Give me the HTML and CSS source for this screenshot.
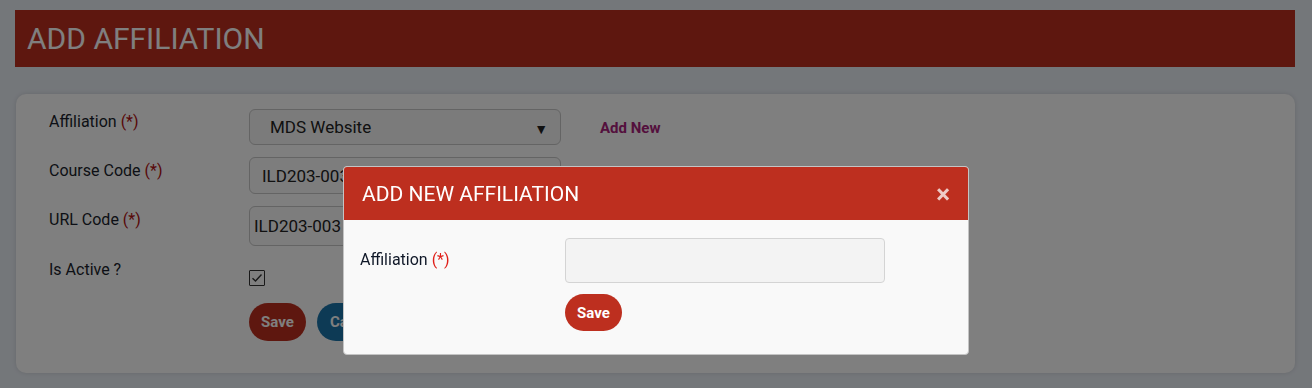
FILE: index.html
```html
<!DOCTYPE html>
<html lang="en">
<head>
  <meta charset="UTF-8">
  <meta name="viewport" content="width=device-width, initial-scale=1.0">
  <title>Add Affiliation</title>
  <link rel="stylesheet" href="styles.css">
</head>
<body>
  <h1 class="page-title">ADD AFFILIATION</h1>

  <div class="card">
    <div class="form-row row-select">
      <label class="form-label">Affiliation <span class="req">(*)</span></label>
      <div class="select-box">
        <span>MDS Website</span>
        <span class="caret">&#9660;</span>
      </div>
      <a href="#" class="add-new">Add New</a>
    </div>
    <div class="form-row row-course">
      <label class="form-label">Course Code <span class="req">(*)</span></label>
      <input type="text" class="text-input" value="ILD203-003">
    </div>
    <div class="form-row row-url">
      <label class="form-label">URL Code <span class="req">(*)</span></label>
      <input type="text" class="text-input url-input" value="ILD203-003">
    </div>
    <div class="form-row row-active">
      <label class="form-label">Is Active ?</label>
      <span class="check">
        <svg width="12" height="10" viewBox="0 0 12 10"><path d="M1.5 5.2 L4.5 8 L10.5 1.5" fill="none" stroke="#333" stroke-width="1.4"/></svg>
      </span>
    </div>
    <div class="form-row row-actions">
      <span class="form-label"></span>
      <button class="btn btn-save">Save</button>
      <button class="btn btn-cancel">Cancel</button>
    </div>
  </div>

  <div class="overlay"></div>

  <div class="modal">
    <div class="modal-header">
      <h2>ADD NEW AFFILIATION</h2>
      <span class="close">&times;</span>
    </div>
    <div class="modal-body">
      <label class="modal-label">Affiliation <span class="req-bright">(*)</span></label>
      <div class="modal-field">
        <input type="text" class="modal-input">
        <button class="btn btn-save">Save</button>
      </div>
    </div>
  </div>
</body>
</html>
```

FILE: styles.css
```css
* {
  margin: 0;
  padding: 0;
  box-sizing: border-box;
}
body {
  background: #e9eef5;
  font-family: Roboto, "Liberation Sans", sans-serif;
  padding: 10px 17px 0 15px;
  height: 388px;
  overflow: hidden;
}
.page-title {
  background: #bd2f1f;
  color: #fff;
  font-size: 30px;
  font-weight: 400;
  height: 57px;
  line-height: 58px;
  padding-left: 12px;
}
.card {
  margin: 27px 0 0 1px;
  background: #fefefe;
  border-radius: 10px;
  height: 279px;
  padding: 15px 0 0 33px;
  box-shadow: 0 0 5px rgba(0, 0, 0, 0.12);
}
.form-row {
  display: flex;
  align-items: flex-start;
}
.form-label {
  width: 200px;
  flex-shrink: 0;
  font-size: 16px;
  color: #1a1e2c;
  padding-top: 3px;
}
.row-course .form-label,
.row-url .form-label {
  padding-top: 4px;
}
.req {
  color: #b01010;
}
.req-bright {
  color: #e0201a;
}
.select-box {
  width: 312px;
  height: 36px;
  border: 1px solid #c8c8c8;
  border-radius: 6px;
  background: #f6f6f6;
  display: flex;
  align-items: center;
  justify-content: space-between;
  padding: 0 12px 0 20px;
  font-size: 17px;
  color: #222;
}
.caret {
  font-size: 14px;
  padding-top: 4px;
}
.add-new {
  margin: 10px 0 0 39px;
  font-size: 15px;
  font-weight: 700;
  color: #a8207a;
  text-decoration: none;
}
.row-course {
  margin-top: 12px;
}
.row-url {
  margin-top: 12px;
}
.row-active {
  margin-top: 13px;
}
.text-input {
  width: 312px;
  height: 37px;
  border: 1px solid #c8c8c8;
  border-radius: 6px;
  background: #fafafa;
  padding-left: 12px;
  font-family: inherit;
  font-size: 17px;
  color: #222;
}
.url-input {
  height: 40px;
  padding-left: 4px;
}
.row-active .form-label {
  padding-top: 1px;
}
.check {
  width: 16px;
  height: 16px;
  margin-top: 11px;
  border: 1px solid #333;
  border-radius: 1px;
  background: #fff;
  display: flex;
  align-items: center;
  justify-content: center;
}
.row-actions {
  margin-top: 17px;
}
.btn {
  border: none;
  border-radius: 20px;
  height: 38px;
  padding: 0 12px;
  font-family: inherit;
  font-size: 15px;
  font-weight: 700;
  color: #fff;
}
.btn-save {
  background: #bd2f1f;
  width: 57px;
}
.btn-cancel {
  background: #1a74aa;
  margin-left: 11px;
  width: 72px;
}
.overlay {
  position: fixed;
  inset: 0;
  background: rgba(0, 0, 0, 0.5);
}
.modal {
  position: fixed;
  left: 343px;
  top: 166px;
  width: 626px;
  height: 189px;
  background: #f9f9f9;
  border: 1px solid #c4c4c4;
  border-radius: 4px;
  overflow: hidden;
}
.modal-header {
  background: #bd2f1f;
  height: 53px;
  display: flex;
  align-items: center;
  justify-content: space-between;
  padding: 0 18px 0 18px;
  color: #fff;
}
.modal-header h2 {
  font-size: 21px;
  font-weight: 400;
}
.close {
  font-size: 26px;
  font-weight: 700;
  opacity: 0.75;
  line-height: 1;
}
.modal-body {
  display: flex;
  padding: 18px 0 0 16px;
}
.modal-label {
  width: 205px;
  font-size: 16px;
  color: #101828;
  padding-top: 12px;
}
.modal-field {
  display: flex;
  flex-direction: column;
  align-items: flex-start;
  gap: 11px;
}
.modal-input {
  width: 320px;
  height: 45px;
  border: 1px solid #d4d4d4;
  border-radius: 4px;
  background: #f3f3f3;
}
.modal-field .btn-save {
  height: 37px;
}
```
